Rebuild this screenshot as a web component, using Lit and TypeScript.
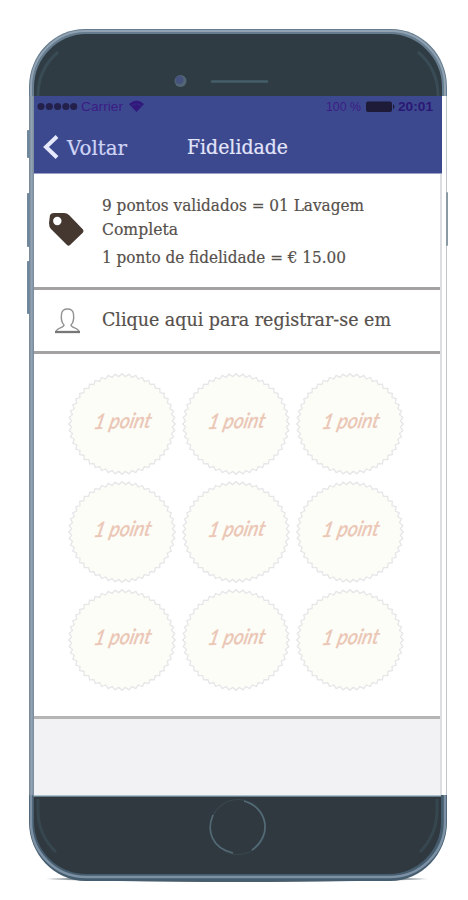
import { LitElement, html, css } from "lit";
import { customElement, property } from "lit/decorators.js";

/** Points of a serrated ellipse used as the stamp outline. */
function serrated(cx: number, cy: number, rx: number, ry: number, teeth: number): string {
  const pts: string[] = [];
  for (let i = 0; i < teeth * 2; i++) {
    const a = (i * Math.PI) / teeth;
    const d = i % 2 ? 2.8 : 0;
    pts.push(`${(cx + (rx - d) * Math.cos(a)).toFixed(1)},${(cy + (ry - d) * Math.sin(a)).toFixed(1)}`);
  }
  return pts.join(" ");
}
const STAMP = serrated(57, 54, 53.3, 50.3, 48);

/** A line of text fitted to a given width. */
@customElement("fit-text")
export class FitText extends LitElement {
  @property() text = "";
  @property({ type: Number }) width = 100;
  @property({ type: Number }) size = 17;

  static styles = css`
    :host { display: block; }
    svg { display: block; overflow: visible; }
    text { font-family: "DejaVu Serif", serif; fill: currentColor; stroke: currentColor; stroke-width: 0.2px; }
  `;

  render() {
    return html`<svg width=${this.width} height="24">
      <text y="18" font-size=${this.size} textLength=${this.width} lengthAdjust="spacingAndGlyphs">${this.text}</text>
    </svg>`;
  }
}

@customElement("point-stamp")
export class PointStamp extends LitElement {
  static styles = css`
    :host { display: block; }
    svg { display: block; }
    text { font: italic 21px "Lato", sans-serif; fill: #ebc6b5; stroke: #ebc6b5; stroke-width: 0.4px; }
  `;
  render() {
    return html`<svg width="114" height="108.3" viewBox="0 0 114 108.3">
      <polygon points=${STAMP} fill="#fdfdf7" stroke="#e6e6e9" stroke-width="1.3"></polygon>
      <g transform="translate(28 59) rotate(-1.500) skewX(-14)">
        <text textLength="57" lengthAdjust="spacingAndGlyphs">1 point</text>
      </g>
    </svg>`;
  }
}

@customElement("app-root")
export class AppRoot extends LitElement {
  static styles = css`
    :host { display: block; background: #fff; width: 468px; height: 900px; overflow: hidden; box-sizing: border-box; padding: 29px 0 0 29px; }
    svg { display: block; }
    .phone { position: relative; width: 418px; display: flex; flex-direction: column; }
    .key { position: absolute; background: #71879b; width: 3px; left: -2.5px; border-radius: 1px; }
    .k1 { top: 101px; height: 28px; }
    .k2 { top: 164px; height: 54px; }
    .k3 { top: 232px; height: 53px; }
    .k4 { left: 416.5px; top: 163px; height: 54px; background: #8b9ba6; width: 2.5px; }
    .middle { display: flex; height: 699px; }
    .edge { width: 4.5px; background: linear-gradient(90deg, #748596, #93a2b3 50%, #76899a); }
    .edge-right { flex: 1; display: flex; background: #fff; border-left: 2px solid #dddee2; border-right: 1.5px solid #bfc4cd; box-sizing: border-box; }
    .screen { width: 406.5px; display: flex; flex-direction: column; background: #fff; color: #56504c; }
    .top { background: #3d498f; height: 77.5px; margin-right: -1.5px; position: relative; border-bottom: 1px solid #9aa0c6; box-sizing: border-box; }
    .status { display: flex; align-items: center; height: 19px; padding: 0 8px 0 3px; font-family: "Liberation Sans", sans-serif; font-size: 13px; }
    .time { font-weight: bold; }
    .grow { flex: 1; }
    .nav { display: flex; align-items: center; color: #e3e5fb; padding-left: 9.5px; height: 64px; }
    .voltar { margin: 3px 0 0 8px; color: #cfd4f6; }
    .title { margin: 1px 0 0 60px; }
    .row { display: flex; border-bottom: 3px solid #a3a1a1; box-sizing: border-box; }
    .info { height: 116px; padding: 19px 0 0 15px; }
    .tag { margin-top: 19px; }
    .lines { display: flex; flex-direction: column; margin-left: 16.5px; }
    .lines .last { margin-top: 4px; }
    .register { height: 64px; padding: 18.5px 0 0 20px; }
    .register fit-text { margin-left: 21.5px; }
    .points { display: grid; grid-template-columns: repeat(3, 114px); grid-auto-rows: 108.3px; align-content: start; padding: 16px 0 0 31.5px; height: 365px; box-sizing: border-box; border-bottom: 3px solid #b5b5b6; }
    .blank { flex: 1; background: #f2f2f4; }
  `;

  render() {
    return html`<div class="phone">
      <i class="key k1"></i><i class="key k2"></i><i class="key k3"></i><i class="key k4"></i>
      <svg width="418" height="67" viewBox="0 0 418 67">
        <path d="M0 67V58C0 26 25 0 56 0H362C393 0 418 26 418 58V67Z" fill="#667d8f"></path>
        <path d="M2 67V58C2 27 27 2 56 2H362C391 2 416 27 416 58V67" fill="none" stroke="#91a2b2" stroke-width="2"></path>
        <path d="M5 67V58C5 29 29 5 57 5H361C389 5 413 29 413 58V67Z" fill="#303c44"></path>
        <path d="M9 67C9 49 16 34 29 23M409 67C409 49 402 34 389 23" fill="none" stroke="#3f5560" stroke-width="3" opacity=".6"></path>
        <circle cx="151.500" cy="52" r="6" fill="#536674"></circle>
        <circle cx="150.500" cy="51" r="4" fill="#45527d"></circle>
        <path d="M183 52.500H238" stroke="#445e6a" stroke-width="2.500" stroke-linecap="round"></path>
      </svg>
      <div class="middle">
        <div class="edge"></div>
        <div class="screen">
          <div class="top">
            <div class="status">
              <svg width="108" height="18" viewBox="0 0 108 18">
                <g fill="#23214c"><circle cx="4" cy="9.500" r="3.600"></circle><circle cx="12.300" cy="9.500" r="3.600"></circle><circle cx="20.600" cy="9.500" r="3.600"></circle><circle cx="28.900" cy="9.500" r="3.600"></circle><circle cx="36.700" cy="9.500" r="3.600"></circle></g>
                <text x="44" y="14" fill="#3b1c85" textLength="42" lengthAdjust="spacingAndGlyphs">Carrier</text>
                <path d="M92 7Q99.500 0 107 7L99.500 15Z" fill="#32177c"></path>
                <path d="M94.500 9Q99.500 5 104.500 9" fill="none" stroke="#3d498f" stroke-width="1" opacity=".4"></path>
              </svg>
              <span class="grow"></span>
              <svg width="108" height="18" viewBox="0 0 108 18">
                <text x="0" y="14" fill="#3b1c85" textLength="35" lengthAdjust="spacingAndGlyphs">100 %</text>
                <rect x="40" y="4.500" width="26" height="10.500" rx="2" fill="#1d1b38"></rect>
                <path d="M67 7Q70 9.700 67 12.500Z" fill="#1d1b38"></path>
                <text class="time" x="72" y="14" fill="#2b1874" textLength="35" lengthAdjust="spacingAndGlyphs">20:01</text>
              </svg>
            </div>
            <div class="nav">
              <svg width="16" height="26" viewBox="0 0 16 26"><path d="M14 2.500L3 13L14 23.500" fill="none" stroke="#e6e8fb" stroke-width="4"></path></svg>
              <fit-text class="voltar" text="Voltar" width="60" size="20"></fit-text>
              <fit-text class="title" text="Fidelidade" width="101" size="20.500"></fit-text>
            </div>
          </div>
          <div class="row info">
            <svg class="tag" width="37" height="36" viewBox="0 0 37 36"><path d="M1 3Q2 1 5 1H15Q18 1 20 3L34 17.500Q35 19 34 20.500L21 33Q19.500 34.500 18 33L2 17Q0 15 0 11Z" fill="#453831"></path><circle cx="8.300" cy="9" r="4.200" fill="#fff"></circle></svg>
            <div class="lines">
              <fit-text text="9 pontos validados = 01 Lavagem" width="262" size="16.500"></fit-text>
              <fit-text text="Completa" width="76" size="16.500"></fit-text>
              <fit-text class="last" text="1 ponto de fidelidade = € 15.00" width="244" size="16.500"></fit-text>
            </div>
          </div>
          <div class="row register">
            <svg width="27" height="26" viewBox="0 0 27 26"><path d="M2 24C2 20 10 20 10 17C7 14 7 10 7.500 6C8 2 11 1 13.500 1S19 2 19.500 6C20 10 20 14 17 17C17 20 25 20 25 24" fill="none" stroke="#929292" stroke-width="1.400"></path><path d="M1 24H26" stroke="#777" stroke-width="2.300"></path></svg>
            <fit-text text="Clique aqui para registrar-se em" width="289" size="18.500"></fit-text>
          </div>
          <div class="points">${Array.from({ length: 9 }, () => html`<point-stamp></point-stamp>`)}</div>
          <div class="blank"></div>
        </div>
        <div class="edge-right"></div>
      </div>
      <svg width="418" height="90" viewBox="0 0 418 90">
        <defs><radialGradient id="shade"><stop offset=".8" stop-color="#4e5e69"></stop><stop offset="1" stop-color="#4e5e69" stop-opacity="0"></stop></radialGradient></defs>
        <ellipse cx="208" cy="84" rx="194" ry="3.200" fill="url(#shade)"></ellipse>
        <path d="M0 0H418V27C418 59 393 86 361 86H57C25 86 0 59 0 27Z" fill="#465d6f"></path>
        <path d="M2 0V27C2 58 27 82 57 82H361C391 82 416 58 416 27V0" fill="none" stroke="#7c91a4" stroke-width="2.500"></path>
        <path d="M5 0H412V27C412 56 388 79 360 79H57C29 79 5 56 5 27Z" fill="#30393f"></path>
        <path d="M4.500 0H412" stroke="#a9c3d1" stroke-width="3"></path>
        <path d="M9 4V16C9 32 16 47 27 57M408 4V16C408 32 401 47 391 57" fill="none" stroke="#3c515b" stroke-width="3" opacity=".6"></path>
        <ellipse cx="209" cy="32" rx="27.500" ry="27.500" fill="none" stroke="#39474f" stroke-width="1.200"></ellipse>
        <path d="M184 20C177 36 183 53 204 58M215 6C237 12 245 39 223 55" fill="none" stroke="#536a77" stroke-width="1.700"></path>
      </svg>
    </div>`;
  }
}
